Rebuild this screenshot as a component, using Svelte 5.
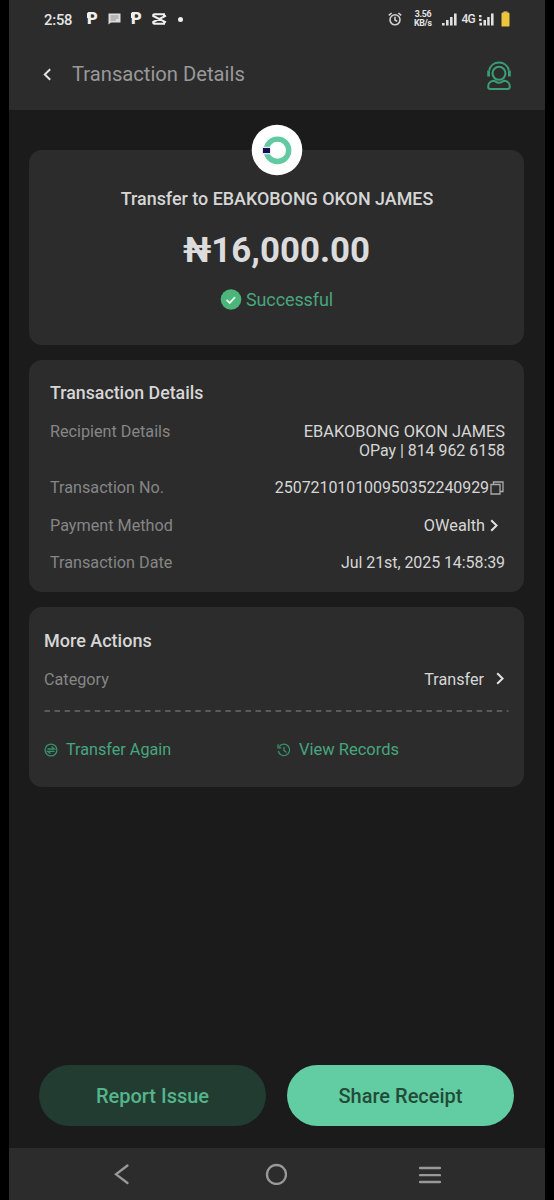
<script lang="ts">
	const recipient = 'EBAKOBONG OKON JAMES';
	const bars = [2.5, 5.5, 8.5, 12];
</script>

{#snippet chevron()}
	<svg class="chevron" viewBox="0 0 8 13" width="8" height="13">
		<path d="M1.2 1.2 L6.6 6.5 L1.2 11.8" />
	</svg>
{/snippet}

{#snippet palm()}
	<div class="palm">
		<span>P</span>
	</div>
{/snippet}

<div class="screen">
	<header>
		<div class="statusBar">
			<span class="clock">2:58</span>
			<div class="notifications">
				{@render palm()}
				<svg viewBox="0 0 13 12" width="13" height="12">
					<path d="M0.5 0.5h12v9H3L0.5 11.5z" fill="#dcdcdc" />
					<path d="M2.5 3h8M2.5 5h8M2.5 7h5.5" stroke="#888" stroke-width="0.9" />
				</svg>
				{@render palm()}
				<svg viewBox="0 0 15 12" width="15" height="12">
					<path
						d="M13 1.3H2.5Q1 1.3 1.2 3L14 9.4M13 10.7H2.5Q1 10.7 1.2 9L14 2.6M12 1.3V3M12 10.7V9"
						fill="none"
						stroke="#efefef"
						stroke-width="2"
					/>
				</svg>
				<i class="dot"></i>
			</div>
			<div class="system">
				<svg class="alarm" viewBox="0 0 14 14" width="14" height="14">
					<circle cx="7" cy="7.8" r="5" />
					<path d="M7 4.8V8l2.2 1.4M0.8 3.3L3.6 1M13.2 3.3L10.4 1" />
				</svg>
				<div class="speed"><span>3.56</span><span>KB/s</span></div>
				<svg class="signal" viewBox="0 0 15 13" width="15" height="13">
					{#each bars as h, i}
						<rect x={i * 4} y={12.5 - h} width="2.6" height={h} />
					{/each}
				</svg>
				<span class="network">4G</span>
				<svg class="signal second" viewBox="0 0 15 13" width="15" height="13">
					<path d="M0 2h2.5v2.2H0zM0 5.7h2.5v2.2H0zM0.5 9.8h2.5v2.7H0.5z" />
					<rect x="4.5" y="7" width="2.5" height="5.5" />
					<rect x="8.2" y="4" width="2.5" height="8.5" />
					<rect x="12" y="0.5" width="2.6" height="12" />
				</svg>
				<svg viewBox="0 0 9 16" width="9" height="16">
					<rect x="2.5" y="0.3" width="4" height="2" fill="#b9a983" />
					<rect x="0.5" y="1.6" width="8" height="14" rx="1.2" fill="#edc43c" />
				</svg>
			</div>
		</div>
		<div class="titleBar">
			<svg class="back" viewBox="0 0 9 13" width="9" height="13">
				<path d="M7.2 1.2L1.8 6.5L7.2 11.8" />
			</svg>
			<h1>Transaction Details</h1>
			<svg class="support" viewBox="0 0 26 30" width="26" height="30">
				<circle cx="13" cy="12.3" r="6.5" />
				<path d="M3.2 9.5C5.5 -1.2 20.5 -1.2 22.8 9.5" />
				<path d="M2.6 9.5v6M23.4 9.5v6" stroke-width="2.8" />
				<path
					d="M7.5 19.8C9.5 20 10 21.7 13 21.7S16.5 20 18.5 19.8C22 20.2 24 23 23.8 26.2Q23.6 28 21.8 28H4.2Q2.4 28 2.2 26.2C2 23 4 20.2 7.5 19.8z"
				/>
			</svg>
		</div>
	</header>

	<main>
		<section class="card summary">
			<div class="logo">
				<svg viewBox="0 0 52 52" width="52" height="52">
					<circle cx="26" cy="26" r="25.3" fill="#fff" />
					<circle cx="26.5" cy="26.3" r="11.2" fill="none" stroke="#62c9a2" stroke-width="5.4" />
					<rect x="11" y="22.8" width="8.8" height="7.5" fill="#e4e6f5" />
					<rect x="12" y="24" width="7" height="5" fill="#17104f" />
				</svg>
			</div>
			<p class="payee">Transfer to {recipient}</p>
			<p class="amount">₦16,000.00</p>
			<p class="status">
				<svg viewBox="0 0 22 22" width="22" height="22">
					<circle cx="11" cy="10.5" r="10.3" fill="#4cb579" />
					<path d="M6.5 10.9l3.2 3 5.4-5.8" fill="none" stroke="#e5f5ea" stroke-width="1.8" />
				</svg>
				<span>Successful</span>
			</p>
		</section>

		<section class="card details">
			<h2>Transaction Details</h2>
			<dl>
				<div class="row recipient">
					<dt>Recipient Details</dt>
					<dd><span class="name">{recipient}</span><br /><span class="account">OPay | 814 962 6158</span></dd>
				</div>
				<div class="row">
					<dt>Transaction No.</dt>
					<dd class="copyable">
						<span>250721010100950352240929</span>
						<svg viewBox="0 0 14 14" width="14" height="14">
							<path d="M1 3.5h9v9.5H1zM3.5 3V1H13v9.5h-2.5" />
						</svg>
					</dd>
				</div>
				<div class="row">
					<dt>Payment Method</dt>
					<dd class="wallet"><span>OWealth</span>{@render chevron()}</dd>
				</div>
				<div class="row">
					<dt>Transaction Date</dt>
					<dd class="time">Jul 21st, 2025 14:58:39</dd>
				</div>
			</dl>
		</section>

		<section class="card actions">
			<h2>More Actions</h2>
			<div class="row">
				<span class="label">Category</span>
				<span class="category"><span>Transfer</span>{@render chevron()}</span>
			</div>
			<svg class="divider" viewBox="0 0 465 2" width="465" height="2">
				<path d="M0.5 1H464.5" />
			</svg>
			<div class="links">
				<a href="#again">
					<svg viewBox="0 0 14 14" width="14" height="14">
						<circle cx="7" cy="7" r="5.9" />
						<path d="M3.5 6h7L7.5 3.6M10.5 8.3h-7l3 2.3" />
					</svg>
					<span>Transfer Again</span>
				</a>
				<a href="#records">
					<svg viewBox="0 0 14 14" width="14" height="14">
						<path d="M2.3 3.5A5.7 5.7 0 1 1 1.3 8M1 1.3v3.5h3.3M7 3.8V7.4l2.6 2" />
					</svg>
					<span class="records">View Records</span>
				</a>
			</div>
		</section>
	</main>

	<div class="buttons">
		<button class="report">Report Issue</button>
		<button class="share">Share Receipt</button>
	</div>

	<nav>
		<svg viewBox="0 0 22 22" width="22" height="22"><path d="M16.5 2.5L5 11.3l11.5 8.7" /></svg>
		<svg viewBox="0 0 22 22" width="22" height="22"><circle cx="11.5" cy="11.5" r="9.5" /></svg>
		<svg viewBox="0 0 22 22" width="22" height="22"><path d="M1 5h20M1 12.2h20M1 19h20" /></svg>
	</nav>
</div>

<style>
	:global(body) {
		background: #000;
	}
	* {
		box-sizing: border-box;
		margin: 0;
		padding: 0;
	}
	svg {
		display: block;
		flex: none;
	}
	.screen {
		width: 536px;
		height: 1200px;
		margin: 0 auto;
		display: flex;
		flex-direction: column;
		background: #1b1b1b;
		font-family: Roboto, sans-serif;
		color: #d6d6d6;
		white-space: nowrap;
	}
	header {
		height: 110px;
		background: #2c2c2c;
	}
	.statusBar {
		height: 38px;
		padding: 0 35px;
		display: flex;
		align-items: center;
		color: #e4e4e4;
	}
	.clock {
		width: 43px;
		font-size: 14.8px;
		font-weight: 500;
		line-height: 18px;
		padding-top: 2px;
		letter-spacing: -0.2px;
	}
	.notifications {
		display: flex;
		align-items: center;
		gap: 10px;
	}
	.palm {
		position: relative;
		width: 11px;
		height: 18px;
		color: #efefef;
		font-size: 16.5px;
		font-weight: 900;
		line-height: 18px;
	}
	.palm::before {
		content: '';
		position: absolute;
		top: 3px;
		left: 0;
		width: 2px;
		height: 5px;
		background: #efefef;
	}
	.dot {
		width: 5px;
		height: 5px;
		margin-left: 1px;
		border-radius: 50%;
		background: #efefef;
	}
	.system {
		margin-left: auto;
		display: flex;
		align-items: center;
	}
	.alarm {
		fill: none;
		stroke: #d2d2d2;
		stroke-width: 1.6;
	}
	.speed {
		width: 19px;
		margin: 0 10px 0 11px;
		display: flex;
		flex-direction: column;
		align-items: center;
		font-size: 8.8px;
		font-weight: 700;
		line-height: 9px;
		letter-spacing: -0.3px;
	}
	.signal {
		fill: #e0e0e0;
	}
	.network {
		margin: 0 4px;
		font-size: 12px;
		font-weight: 500;
		letter-spacing: -0.7px;
	}
	.second {
		margin-right: 7px;
	}
	.titleBar {
		height: 72px;
		padding: 0 33px 0 34px;
		display: flex;
		align-items: center;
	}
	.back,
	.chevron {
		fill: none;
		stroke: #e2e2e2;
		stroke-width: 2;
	}
	h1 {
		margin-left: 20px;
		color: #999;
		font-size: 20.2px;
		font-weight: 400;
		line-height: 24px;
	}
	.support {
		margin: 3px 0 0 auto;
		fill: none;
		stroke: #3a9d75;
		stroke-width: 2.1;
	}
	main {
		padding: 40px 21px 0 20px;
		display: flex;
		flex-direction: column;
		gap: 15px;
	}
	.card {
		border-radius: 13px;
		background: #2c2c2c;
	}
	.summary {
		position: relative;
		height: 195px;
		padding-top: 37px;
		display: flex;
		flex-direction: column;
		align-items: center;
	}
	.logo {
		position: absolute;
		top: -26px;
		left: 222px;
	}
	.payee {
		font-size: 17.9px;
		font-weight: 500;
		line-height: 24px;
		padding-left: 1px;
	}
	.amount {
		margin-top: 19px;
		color: #dcdcdc;
		font-size: 34.9px;
		font-weight: 700;
		line-height: 42px;
	}
	.status {
		margin-top: 16px;
		display: flex;
		align-items: center;
		gap: 4px;
		color: #48a67e;
		font-size: 18px;
		line-height: 24px;
		letter-spacing: -0.1px;
	}
	.details {
		height: 232px;
		padding: 21px 19px 0 21px;
	}
	h2 {
		font-size: 17.8px;
		font-weight: 500;
		line-height: 24px;
	}
	.actions h2 {
		font-size: 18px;
	}
	.row {
		display: flex;
		justify-content: space-between;
		font-size: 16px;
		line-height: 20px;
	}
	dl {
		margin-top: 17px;
		display: flex;
		flex-direction: column;
		gap: 17.4px;
	}
	dt,
	.label {
		color: #868686;
		font-size: 16.2px;
	}
	dd {
		text-align: right;
	}
	.recipient {
		padding-bottom: 1px;
	}
	.recipient dd,
	.recipient dt {
		line-height: 19px;
	}
	.name {
		font-size: 16.4px;
	}
	.account {
		letter-spacing: -0.05px;
	}
	.time {
		letter-spacing: -0.08px;
	}
	.copyable,
	.wallet,
	.category {
		display: flex;
		align-items: center;
	}
	.copyable svg {
		margin-left: 1px;
		fill: none;
		stroke: #aaa;
		stroke-width: 1.3;
	}
	.copyable {
		padding-right: 1px;
		letter-spacing: -0.07px;
	}
	.wallet {
		gap: 5px;
		padding-right: 7px;
		font-size: 16.3px;
	}
	.actions {
		height: 180px;
		padding: 22px 15px 0 15px;
	}
	.actions .row {
		margin-top: 17px;
	}
	.category {
		gap: 12px;
		padding-right: 5px;
		font-size: 16.2px;
	}
	.category svg {
		margin-top: -3px;
	}
	.divider {
		margin-top: 20px;
		fill: none;
		stroke: #6a6a6a;
		stroke-width: 1.6;
		stroke-dasharray: 5.5 4.55;
	}
	.links {
		margin-top: 28px;
		display: grid;
		grid-template-columns: 233px 1fr;
	}
	a {
		display: flex;
		align-items: center;
		gap: 8px;
		color: #46a67f;
		font-size: 16.2px;
		line-height: 20px;
		text-decoration: none;
	}
	.records {
		font-size: 16.5px;
	}
	a svg {
		fill: none;
		stroke: #37916b;
		stroke-width: 1.3;
	}
	.buttons {
		margin-top: auto;
		padding: 0 31px 0 30px;
		display: flex;
		gap: 21px;
	}
	button {
		flex: 1;
		height: 61px;
		border: none;
		border-radius: 31px;
		font: 500 20px Roboto, sans-serif;
	}
	.report {
		background: #223c32;
		color: #55b58a;
	}
	.share {
		background: #62cda2;
		color: #234b3a;
	}
	nav {
		height: 52px;
		margin-top: 22px;
		padding: 0 104px 0 102px;
		display: flex;
		align-items: center;
		justify-content: space-between;
		background: #2c2c2c;
	}
	nav svg {
		fill: none;
		stroke: #999;
		stroke-width: 2.3;
		stroke-linecap: round;
	}
</style>
